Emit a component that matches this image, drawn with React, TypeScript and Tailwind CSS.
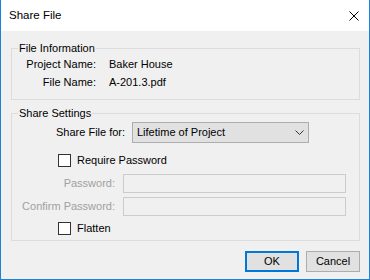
import React from "react";

export default function App() {
  return (
    <div className="w-[370px] h-[280px] flex flex-col bg-[#f0f0f0] border-x border-b border-[#1883d7] font-['Liberation_Sans',sans-serif] text-[11px] text-black">
      <div className="h-[31px] shrink-0 bg-white flex items-center justify-between pl-[8px] pr-[10px]">
        <span className="text-[11.5px]">Share File</span>
        <svg width="10" height="10" viewBox="0 0 10 10">
          <path d="M0.5 0.5 L9.5 9.5 M9.5 0.5 L0.5 9.5" stroke="#000" strokeWidth="1" />
        </svg>
      </div>

      <div className="flex-1 flex flex-col pl-[10px] pr-[9px] pt-[10px]">
        <fieldset className="border border-[#dcdcdc] pb-[9px]">
          <legend className="ml-[6px] px-[1px] leading-[15px]">File Information</legend>
          <div className="flex flex-col gap-[2px]">
            <InfoRow label="Project Name:" value="Baker House" />
            <InfoRow label="File Name:" value="A-201.3.pdf" />
          </div>
        </fieldset>

        <fieldset className="mt-[6px] border border-[#dcdcdc] pb-[5px]">
          <legend className="ml-[6px] px-[1px] leading-[15px]">Share Settings</legend>
          <div className="mt-[1px] flex items-center pl-[44px]">
            <span className="w-[76px]">Share File for:</span>
            <div className="w-[177px] h-[21px] flex items-center justify-between border border-[#adadad] bg-[#e1e1e1] pl-[4px] pr-[4px]">
              <span>Lifetime of Project</span>
              <svg width="9" height="5" viewBox="0 0 9 5">
                <path d="M0.5 0.5 L4.5 4.5 L8.5 0.5" stroke="#333" strokeWidth="1" fill="none" />
              </svg>
            </div>
          </div>

          <Check className="mt-[11px]" label="Require Password" />

          <PassRow className="mt-[7px]" label="Password:" />
          <PassRow className="mt-[4px]" label="Confirm Password:" />

          <Check className="mt-[6px]" label="Flatten" />
        </fieldset>

        <div className="mt-[10px] flex justify-end gap-[7px]">
          <button className="w-[54px] h-[21px] border-2 border-[#0078d7] bg-[#e1e1e1] leading-none">OK</button>
          <button className="w-[54px] h-[21px] border border-[#adadad] bg-[#e1e1e1] leading-none">Cancel</button>
        </div>
      </div>
    </div>
  );
}

function InfoRow({ label, value }: { label: string; value: string }) {
  return (
    <div className="flex h-[16px] leading-[16px]">
      <span className="w-[84px] text-right">{label}</span>
      <span className="ml-[13px]">{value}</span>
    </div>
  );
}

function Check({ label, className }: { label: string; className?: string }) {
  return (
    <div className={"flex items-center h-[13px] pl-[46px] " + (className || "")}>
      <span className="w-[13px] h-[13px] border border-[#333333] bg-white" />
      <span className="ml-[6px]">{label}</span>
    </div>
  );
}

function PassRow({ label, className }: { label: string; className?: string }) {
  return (
    <div className={"flex items-center " + (className || "")}>
      <span className="w-[103px] text-right text-[#a0a0a0]">{label}</span>
      <div className="ml-[8px] w-[223px] h-[19px] border border-[#cccccc] bg-[#f0f0f0]" />
    </div>
  );
}
